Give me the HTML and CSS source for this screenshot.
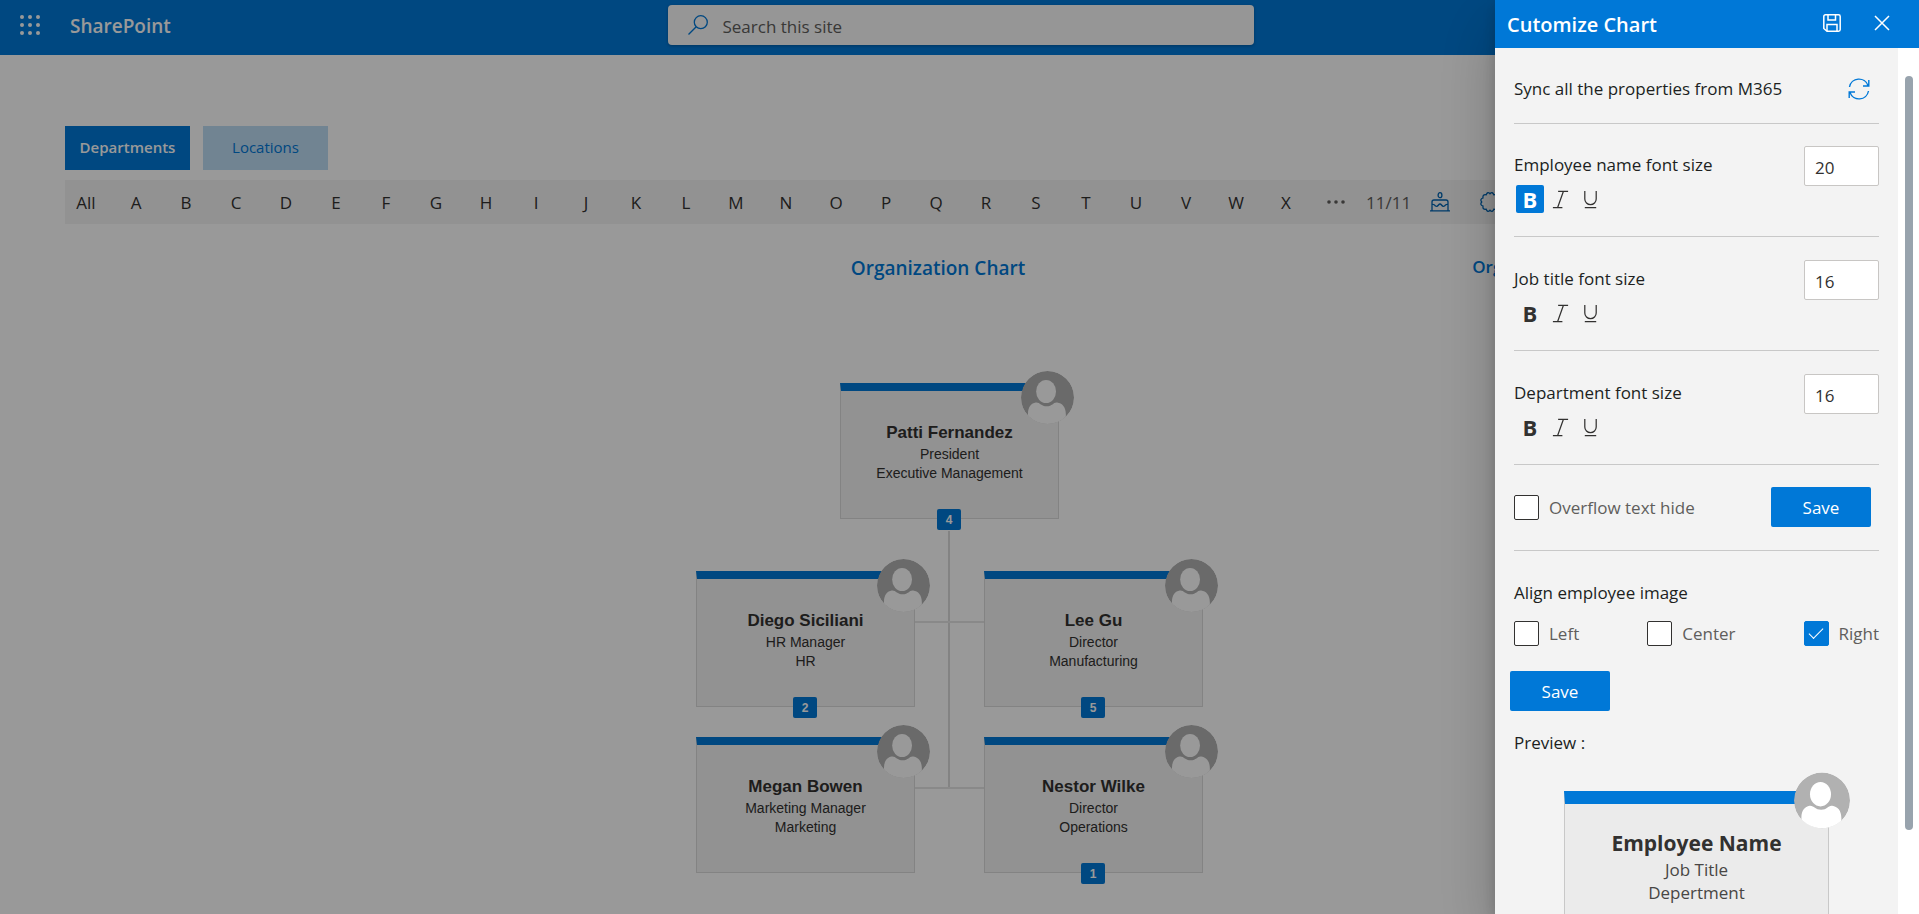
FILE: index.html
```html
<!DOCTYPE html>
<html lang="en">
<head>
<meta charset="utf-8">
<title>Organization Chart</title>
<link rel="stylesheet" href="styles.css">
</head>
<body>
<svg class="sprite" aria-hidden="true">
  <defs>
    <clipPath id="round"><circle cx="28" cy="28" r="28"/></clipPath>
    <symbol id="person" viewBox="0 0 56 56">
      <g clip-path="url(#round)">
        <circle cx="28" cy="28" r="28" fill="#b1b1b1"/>
        <ellipse cx="26.5" cy="21.7" rx="10.5" ry="12.2" fill="#fff"/>
        <path fill="#fff" d="M7.4 49V45C7.4 38 11 34 15.5 33.3C20 32.8 21 37.3 27.2 37.3C33.4 37.3 34 32.8 38.2 33.3C43.5 34 47.4 38 47.4 46V49L47.4 56H7.4Z"/>
      </g>
    </symbol>
    <symbol id="italic" viewBox="0 0 20 20">
      <path d="M7.5 1.5H18M2 18.5H12M13 1.5L7 18.5" fill="none" stroke="currentColor" stroke-width="1.3"/>
    </symbol>
    <symbol id="underline" viewBox="0 0 20 20">
      <path d="M4 1V9.500A6 6 0 0 0 16 9.500V1M4 18.500H16" fill="none" stroke="currentColor" stroke-width="1.3"/>
    </symbol>
  </defs>
</svg>

<header class="suite">
  <button class="waffle" aria-label="App launcher">
    <svg width="20" height="20" viewBox="0 0 20 20" fill="#fff"><circle cx="2" cy="2" r="2"/><circle cx="10" cy="2" r="2"/><circle cx="18" cy="2" r="2"/><circle cx="2" cy="10" r="2"/><circle cx="10" cy="10" r="2"/><circle cx="18" cy="10" r="2"/><circle cx="2" cy="18" r="2"/><circle cx="10" cy="18" r="2"/><circle cx="18" cy="18" r="2"/></svg>
  </button>
  <a class="brand" href="#">SharePoint</a>
  <label class="search">
    <svg width="20" height="20" viewBox="0 0 20 20" fill="none" stroke="#0078d7" stroke-width="1.3"><circle cx="12.800" cy="7.200" r="6.500"/><path d="M8.200 11.800L.5 19.500"/></svg>
    <input type="text" placeholder="Search this site" aria-label="Search this site">
  </label>
</header>

<main class="page">
  <div class="tabs">
    <button class="tab active">Departments</button>
    <button class="tab">Locations</button>
  </div>
  <nav class="letters">
    <button>All</button><button>A</button><button>B</button><button>C</button><button>D</button><button>E</button><button>F</button><button>G</button><button>H</button><button>I</button><button>J</button><button>K</button><button>L</button><button>M</button><button>N</button><button>O</button><button>P</button><button>Q</button><button>R</button><button>S</button><button>T</button><button>U</button><button>V</button><button>W</button><button>X</button>
    <button aria-label="More letters"><svg width="18" height="4" viewBox="0 0 18 4" fill="#605e5c"><circle cx="2" cy="2" r="1.800"/><circle cx="9" cy="2" r="1.800"/><circle cx="16" cy="2" r="1.800"/></svg></button>
    <span class="count">11/11</span>
    <button aria-label="Birthdays"><svg width="20" height="20" viewBox="0 0 20 20" fill="none" stroke="#0063b1" stroke-width="1.300"><ellipse cx="10" cy="3.200" rx="1.900" ry="2.500"/><path d="M2 18.500V10Q2 8 4 8H16Q18 8 18 10V18.500M0 18.900H20M2 12.500Q4 12 5.500 14Q7 15 8.500 13Q10 11 11.500 13Q13 15 14.500 14Q16 12 18 12.500"/></svg></button>
    <button aria-label="Anniversaries"><svg width="20" height="20" viewBox="0 0 20 20" fill="none" stroke="#0063b1" stroke-width="1.300"><path d="M10 1.800Q12.500 -.8 13.800 2.800Q17.500 2 17 6Q20.500 7.200 18.300 10Q20.500 12.800 17 14Q17.500 18 13.800 17.200Q12.500 20.800 10 18.200Q7.500 20.800 6.200 17.200Q2.500 18 3 14Q-.5 12.800 1.700 10Q-.5 7.200 3 6Q2.500 2 6.200 2.800Q7.500 -.8 10 1.800Z"/></svg></button>
  </nav>
  <div class="heads">
    <h1 class="chart-title">Organization Chart</h1>
    <a class="side-link" href="#">Org</a>
  </div>

  <section class="chart">
    <article class="card">
      <svg class="avatar"><use href="#person"/></svg>
      <h2>Patti Fernandez</h2><p>President</p><p>Executive Management</p>
      <button class="kids">4</button>
    </article>
    <div class="reports">
      <article class="card">
        <svg class="avatar"><use href="#person"/></svg>
        <h2>Diego Siciliani</h2><p>HR Manager</p><p>HR</p>
        <button class="kids">2</button>
      </article>
      <article class="card">
        <svg class="avatar"><use href="#person"/></svg>
        <h2>Lee Gu</h2><p>Director</p><p>Manufacturing</p>
        <button class="kids">5</button>
      </article>
      <article class="card">
        <svg class="avatar"><use href="#person"/></svg>
        <h2>Megan Bowen</h2><p>Marketing Manager</p><p>Marketing</p>
      </article>
      <article class="card">
        <svg class="avatar"><use href="#person"/></svg>
        <h2>Nestor Wilke</h2><p>Director</p><p>Operations</p>
        <button class="kids">1</button>
      </article>
    </div>
  </section>
</main>

<div class="overlay"></div>

<aside class="panel">
  <header class="panel-head">
    <h2>Cutomize Chart</h2>
    <button aria-label="Save"><svg width="18" height="18" viewBox="0 0 18 18" fill="none" stroke="#fff" stroke-width="1.500"><path d="M2.500 .8H15.500Q17.200 .8 17.200 2.500V15.500Q17.200 17.200 15.500 17.200H4L.8 14.500V2.500Q.8 .8 2.500 .8Z"/><path d="M5 1V6H12.500V1M4 17V10.500H14V17"/></svg></button>
    <button aria-label="Close"><svg width="16" height="16" viewBox="0 0 16 16" fill="none" stroke="#fff" stroke-width="1.500"><path d="M1 1L15 15M15 1L1 15"/></svg></button>
  </header>
  <div class="panel-main">
    <div class="panel-body">
      <div class="row sync">
        <span class="label">Sync all the properties from M365</span>
        <button class="sync-btn" aria-label="Sync"><svg width="22" height="22" viewBox="0 0 22 22" fill="none" stroke="#0078d7" stroke-width="1.400"><path d="M1.500 9A9.600 9.600 0 0 1 20 7.500M20.800 2V8H15M20.500 13A9.600 9.600 0 0 1 2 14.500M1.200 20V14H7"/></svg></button>
      </div>
      <div class="row font">
        <div>
          <label class="label" for="s1">Employee name font size</label>
          <div class="tools">
            <button class="on" aria-label="Bold">B</button>
            <button aria-label="Italic"><svg><use href="#italic"/></svg></button>
            <button aria-label="Underline"><svg><use href="#underline"/></svg></button>
          </div>
        </div>
        <input id="s1" type="text" value="20">
      </div>
      <div class="row font">
        <div>
          <label class="label" for="s2">Job title font size</label>
          <div class="tools">
            <button aria-label="Bold">B</button>
            <button aria-label="Italic"><svg><use href="#italic"/></svg></button>
            <button aria-label="Underline"><svg><use href="#underline"/></svg></button>
          </div>
        </div>
        <input id="s2" type="text" value="16">
      </div>
      <div class="row font">
        <div>
          <label class="label" for="s3">Department font size</label>
          <div class="tools">
            <button aria-label="Bold">B</button>
            <button aria-label="Italic"><svg><use href="#italic"/></svg></button>
            <button aria-label="Underline"><svg><use href="#underline"/></svg></button>
          </div>
        </div>
        <input id="s3" type="text" value="16">
      </div>
      <div class="row overflow">
        <label class="check"><input type="checkbox">Overflow text hide</label>
        <button class="save">Save</button>
      </div>
      <p class="label align-label">Align employee image</p>
      <div class="choices">
        <label class="check"><input type="checkbox">Left</label>
        <label class="check"><input type="checkbox">Center</label>
        <label class="check"><input type="checkbox" checked>Right</label>
      </div>
      <button class="save align-save">Save</button>
      <p class="label">Preview :</p>
      <article class="preview">
        <svg class="avatar"><use href="#person"/></svg>
        <h3>Employee Name</h3><p>Job Title</p><p>Depertment</p>
      </article>
    </div>
    <div class="track"><div class="thumb"></div></div>
  </div>
</aside>
</body>
</html>
```
FILE: styles.css
```css
* { box-sizing: border-box; }
body {
  margin: 0;
  height: 100vh;
  overflow: hidden;
  background: #fff;
  color: #323130;
  font-family: "Open Sans", "Noto Sans", sans-serif;
  font-size: 17px;
}
h1, h2, h3, p { margin: 0; }
button {
  display: flex;
  align-items: center;
  justify-content: center;
  padding: 0;
  border: 0;
  background: none;
  color: inherit;
  font: inherit;
}
input { font: inherit; color: inherit; }
a { text-decoration: none; }
.sprite { position: absolute; width: 0; height: 0; }

/* suite bar */
.suite {
  display: grid;
  grid-template-columns: 60px 1fr 586px 1fr;
  align-items: center;
  height: 55px;
  padding: 0 2px 5px 0;
  background: #0078d7;
}
.suite .brand { padding: 2px 0 0 10px; color: #fff; font-size: 19px; font-weight: 600; }
.search {
  display: flex;
  align-items: center;
  gap: 15px;
  height: 40px;
  margin-left: -28px;
  width: 586px;
  padding: 0 20px;
  border-radius: 4px;
  background: #fafafa;
  box-shadow: 0 1px 3px rgba(0, 0, 0, .25);
}
.search input { flex: 1; padding: 2px 0 0; border: 0; outline: 0; background: none; }
.search input::placeholder { color: #605e5c; opacity: 1; }

/* page */
.page { margin: 71px 108px 0 65px; }
.tabs { display: flex; gap: 13px; }
.tab {
  width: 125px;
  height: 44px;
  padding-bottom: 2px;
  background: #bcdcf4;
  color: #0078d7;
  font-size: 15px;
}
.tab.active { background: #0078d7; color: #fff; font-weight: 600; }
.letters {
  display: flex;
  align-items: center;
  gap: 10px;
  height: 44px;
  margin-top: 10px;
  padding-left: 1px;
  background: #f3f3f3;
}
.letters button { flex: none; width: 40px; height: 40px; }
.count { width: 44px; color: #605e5c; text-align: center; }
.heads {
  display: grid;
  grid-template-columns: minmax(0, 1fr) auto minmax(0, 1fr);
  align-items: center;
  margin-top: 30px;
}
.chart-title { grid-column: 2; color: #0078d7; font-size: 19px; line-height: 28px; font-weight: 600; }
.side-link { margin-left: 447px; padding-bottom: 3px; color: #0078d7; font-size: 17px; font-weight: 600; }

/* chart */
.chart {
  display: flex;
  flex-direction: column;
  align-items: center;
  gap: 52px;
  margin-top: 101px;
  padding-left: 23px;
  font-family: "Liberation Sans", Arial, sans-serif;
}
.card {
  position: relative;
  display: flex;
  flex-direction: column;
  align-items: center;
  width: 219px;
  height: 136px;
  padding-top: 30px;
  border: 1px solid #dadada;
  border-top: 8px solid #0078d7;
  background: #f3f3f3;
}
.card h2 { font-size: 17px; line-height: 24px; }
.card p { font-size: 14px; line-height: 19px; }
.card .avatar { position: absolute; top: -20px; right: -16px; width: 53px; height: 53px; }
.kids {
  position: absolute;
  bottom: -12px;
  left: 96px;
  width: 24px;
  height: 21px;
  border-radius: 2px;
  background: #0078d7;
  color: #fff;
  font-size: 12px;
  font-weight: 700;
}
.reports {
  position: relative;
  display: grid;
  grid-template-columns: 219px 219px;
  gap: 30px 69px;
}
.reports::before {
  content: "";
  position: absolute;
  top: -40px;
  bottom: 84px;
  left: 252px;
  width: 2px;
  background: #dadada;
}
.reports .card:nth-child(odd)::after {
  content: "";
  position: absolute;
  top: 42px;
  left: 218px;
  width: 69px;
  height: 2px;
  background: #e4e4e4;
}

/* panel */
.overlay { position: fixed; inset: 0; background: rgba(0, 0, 0, .4); }
.panel {
  position: fixed;
  top: 0;
  right: 0;
  bottom: 0;
  display: flex;
  flex-direction: column;
  width: 424px;
  background: #fff;
  box-shadow: 0 26px 58px rgba(0, 0, 0, .22), 0 5px 14px rgba(0, 0, 0, .18);
}
.panel-head {
  display: flex;
  flex: none;
  align-items: center;
  gap: 33px;
  height: 48px;
  padding: 0 29px 2px 12px;
  background: #0078d7;
  color: #fff;
}
.panel-head h2 { flex: 1; padding-top: 2px; font-size: 20px; font-weight: 600; }
.panel-main { display: flex; flex: 1; min-height: 0; }
.panel-body { flex: 1; overflow: hidden; padding: 0 19px; background: #f3f3f3; }
.track { width: 21px; padding: 28px 6px 0 7px; }
.thumb { height: 90%; border-radius: 4px; background: #98a3ad; }
.row { display: flex; justify-content: space-between; border-bottom: 1px solid #c8c8c8; }
.label { display: block; font-size: 17px; line-height: 24px; font-weight: 500; color: #201f1e; }
.sync { align-items: center; height: 76px; padding: 6px 9px 0 0; }
.font { height: 114px; padding-top: 23px; }
.sync + .font { height: 113px; padding-top: 22px; }
.font .label { margin-top: 7px; }
.font input {
  width: 75px;
  height: 40px;
  padding: 2px 10px 0;
  border: 1px solid #c8c6c4;
  border-radius: 2px;
  background: #fff;
}
.tools { display: flex; gap: 2px; margin: 8px 0 0 2px; }
.tools button { width: 28px; height: 28px; border-radius: 2px; font-size: 22px; font-weight: 700; }
.tools .on { background: #0078d7; color: #fff; }
.tools svg { width: 19px; height: 19px; }
.overflow { align-items: center; height: 86px; padding: 0 8px 1px 0; }
.check { display: flex; align-items: center; gap: 10px; color: #605e5c; }
.check input {
  appearance: none;
  display: grid;
  place-items: center;
  width: 25px;
  height: 25px;
  margin: 0;
  border: 1px solid #323130;
  border-radius: 2px;
  background: #fff;
}
.check input:checked { border-color: #0078d7; background: #0078d7; }
.check input:checked::after {
  content: "";
  width: 13px;
  height: 6px;
  margin-bottom: 4px;
  border: solid #fff;
  border-width: 0 0 1px 1px;
  transform: rotate(-45deg);
}
.save {
  width: 100px;
  height: 40px;
  border-radius: 2px;
  background: #0078d7;
  color: #fff;
  font-size: 17px;
}
.align-label { margin-top: 30px; }
.choices { display: flex; justify-content: space-between; margin-top: 16px; }
.align-save { margin: 25px 0 20px -4px; }
.preview {
  position: relative;
  width: 265px;
  height: 170px;
  margin: 36px auto 0 50px;
  padding-top: 24px;
  border: 1px solid #c8c8c8;
  border-top: 13px solid #0078d7;
  background: #ebebeb;
  text-align: center;
}
.preview h3 { font-size: 21px; line-height: 30px; }
.preview p { color: #484644; font-size: 17px; line-height: 23px; }
.preview .avatar { position: absolute; top: -32px; right: -22px; width: 56px; height: 57px; }
```
